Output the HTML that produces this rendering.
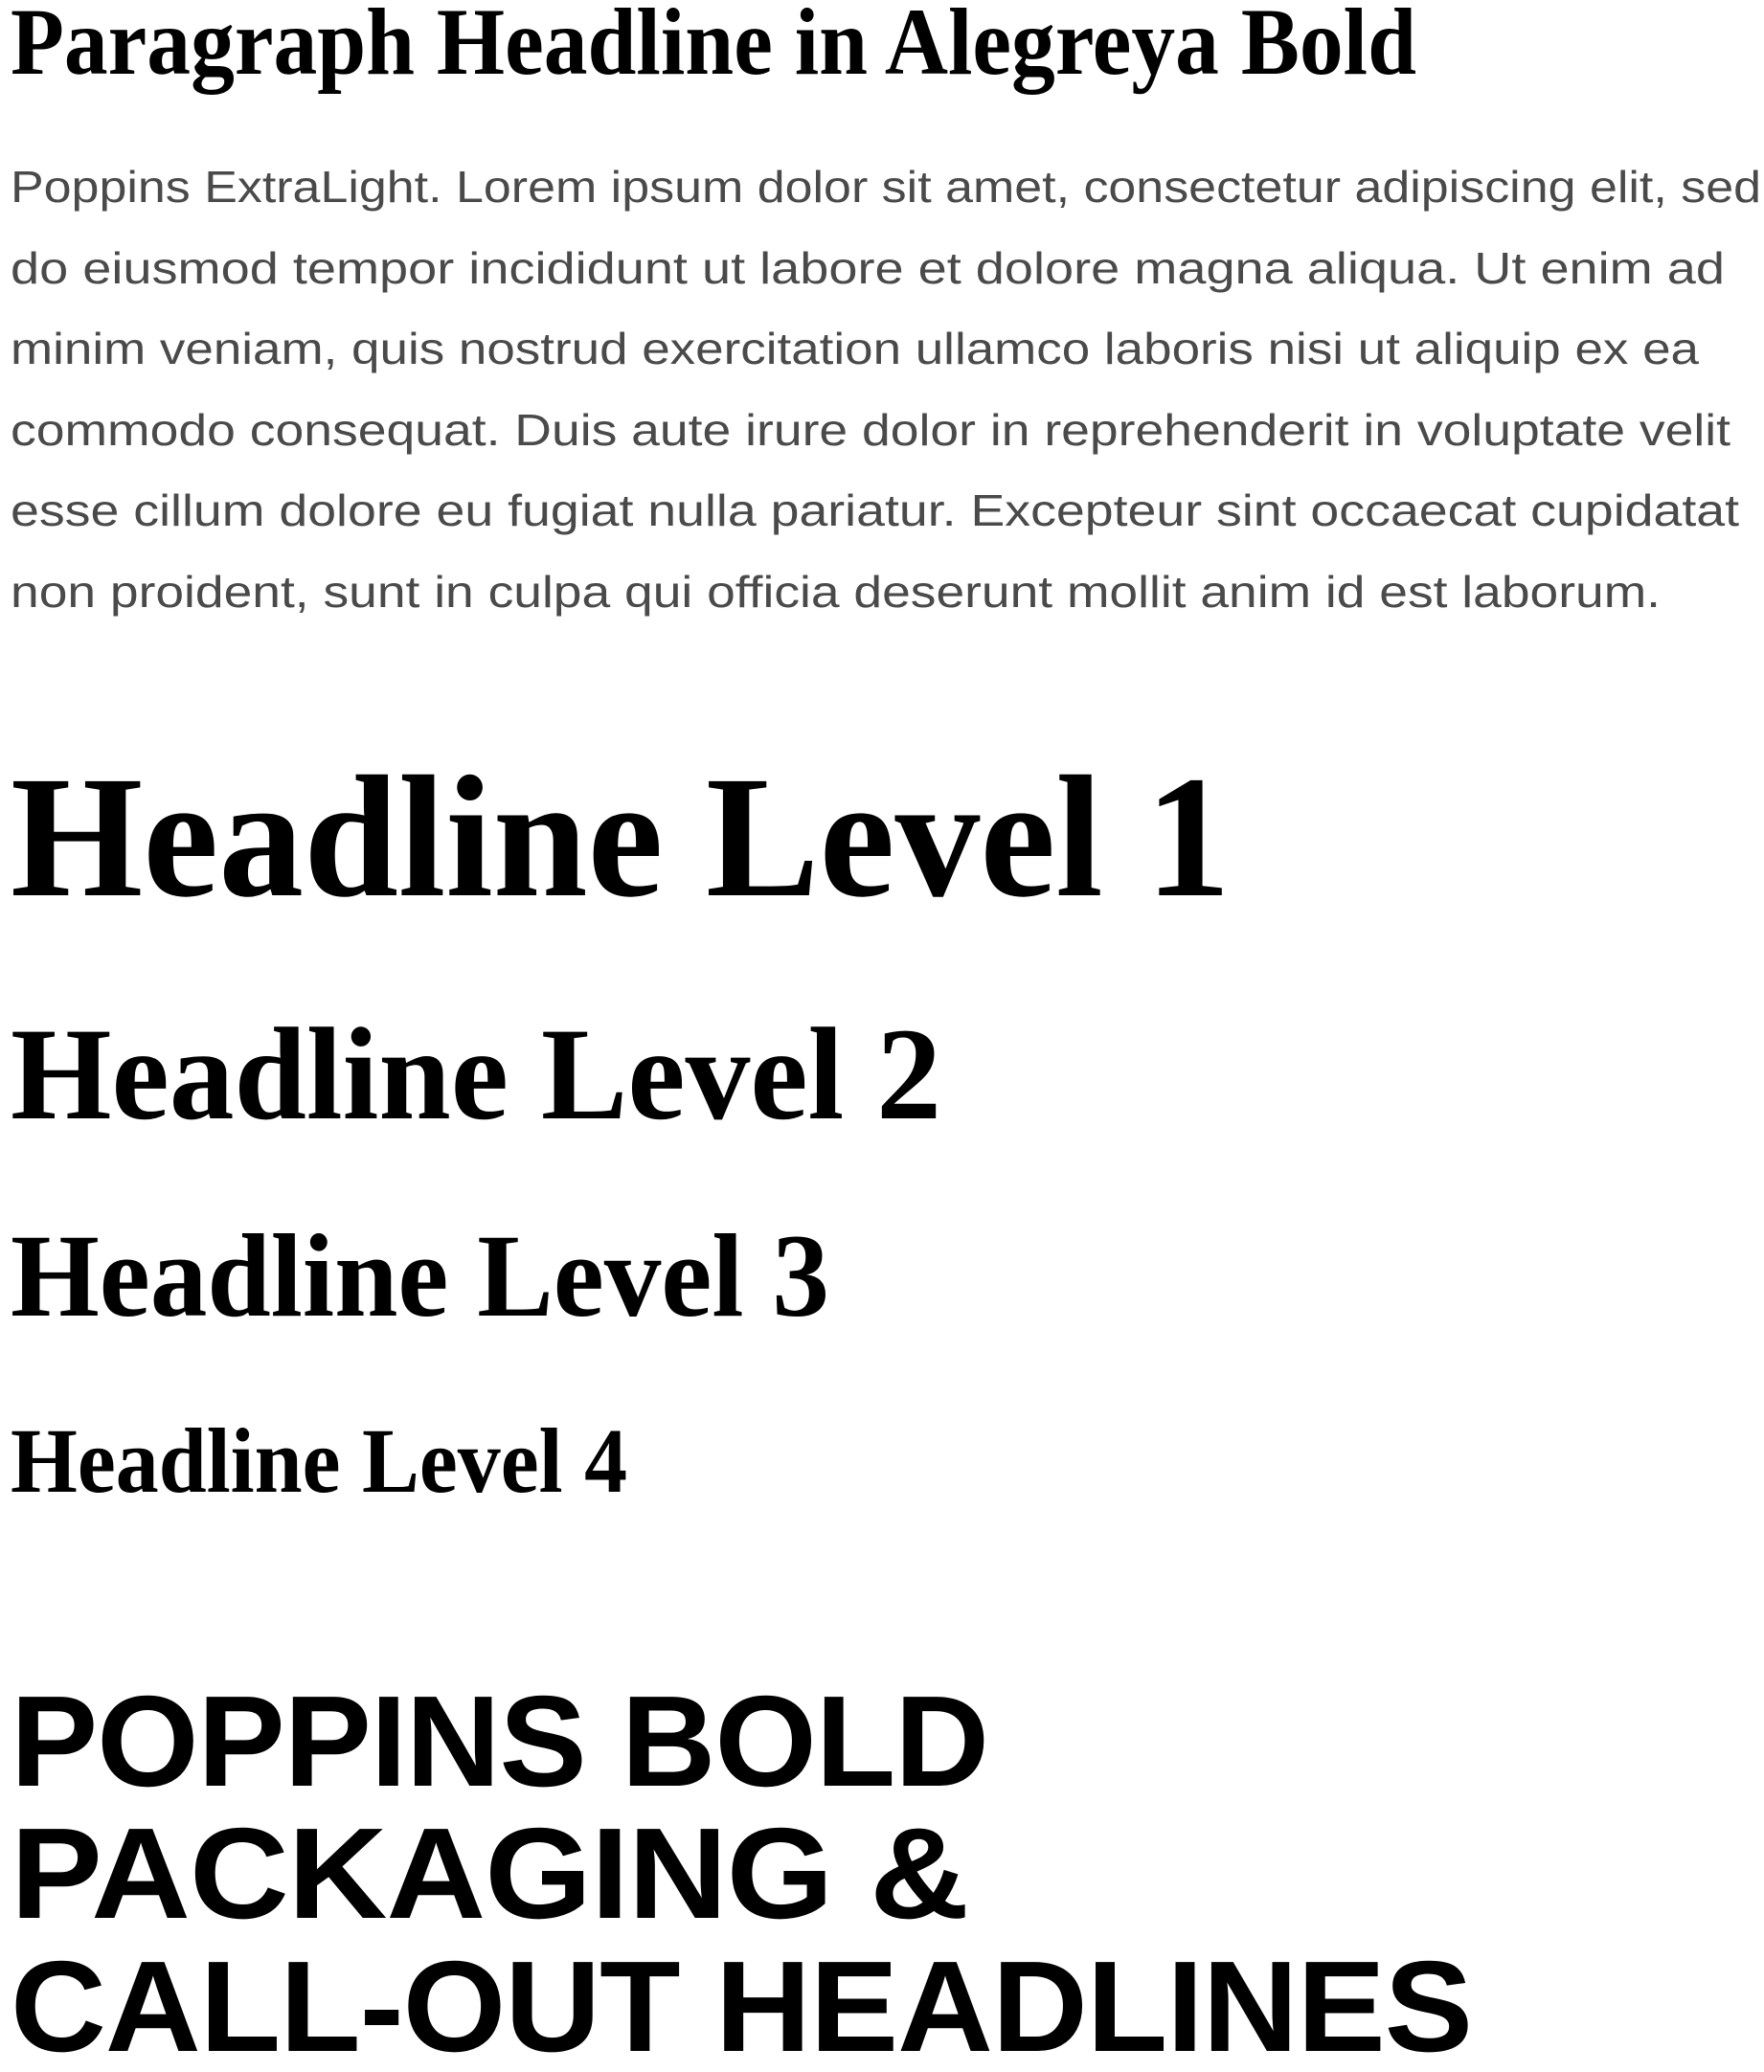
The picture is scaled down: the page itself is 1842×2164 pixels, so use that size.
<!DOCTYPE html>
<html><head><meta charset="utf-8">
<style>
html,body{margin:0;padding:0;background:#fff;width:1842px;height:2164px;overflow:hidden;position:relative}
.t{position:absolute;left:11px;white-space:nowrap;transform-origin:0 0;color:#000}
.s{font-family:"Liberation Serif",serif;font-weight:bold}
.b{font-family:"Liberation Sans",sans-serif;font-weight:normal;color:#4a4a4a;font-size:46px;line-height:84.5px;height:84.5px}
.p{font-family:"Liberation Sans",sans-serif;font-weight:bold;font-size:135px;line-height:normal;letter-spacing:-1px}
</style></head><body>
<div class="t s" id="a" style="top:-14px;font-size:100px">Paragraph Headline in Alegreya Bold</div>
<div class="t b" id="l1" style="top:153px">Poppins ExtraLight. Lorem ipsum dolor sit amet, consectetur adipiscing elit, sed</div>
<div class="t b" id="l2" style="top:237.5px">do eiusmod tempor incididunt ut labore et dolore magna aliqua. Ut enim ad</div>
<div class="t b" id="l3" style="top:322px">minim veniam, quis nostrud exercitation ullamco laboris nisi ut aliquip ex ea</div>
<div class="t b" id="l4" style="top:406.5px">commodo consequat. Duis aute irure dolor in reprehenderit in voluptate velit</div>
<div class="t b" id="l5" style="top:491px">esse cillum dolore eu fugiat nulla pariatur. Excepteur sint occaecat cupidatat</div>
<div class="t b" id="l6" style="top:575.5px">non proident, sunt in culpa qui officia deserunt mollit anim id est laborum.</div>
<div class="t s" id="h1" style="top:770px;font-size:182px">Headline Level 1</div>
<div class="t s" id="h2" style="top:1042px;font-size:138px">Headline Level 2</div>
<div class="t s" id="h3" style="top:1262px;font-size:124px">Headline Level 3</div>
<div class="t s" id="h4" style="top:1470px;font-size:96px">Headline Level 4</div>
<div class="t p" id="p1" style="top:1741px">POPPINS BOLD</div>
<div class="t p" id="p2" style="top:1879px">PACKAGING &amp;</div>
<div class="t p" id="p3" style="top:2018px">CALL-OUT HEADLINES</div>
<script>
var w={a:1468,l1:1828,l2:1790,l3:1763,l4:1796,l5:1805,l6:1723,h1:1274,h2:972,h3:855,h4:644,p1:1021,p2:1000,p3:1526};
for(var k in w){var e=document.getElementById(k);var r=e.getBoundingClientRect().width;if(r>0)e.style.transform='scaleX('+(w[k]/r)+')';}
</script>
</body></html>
